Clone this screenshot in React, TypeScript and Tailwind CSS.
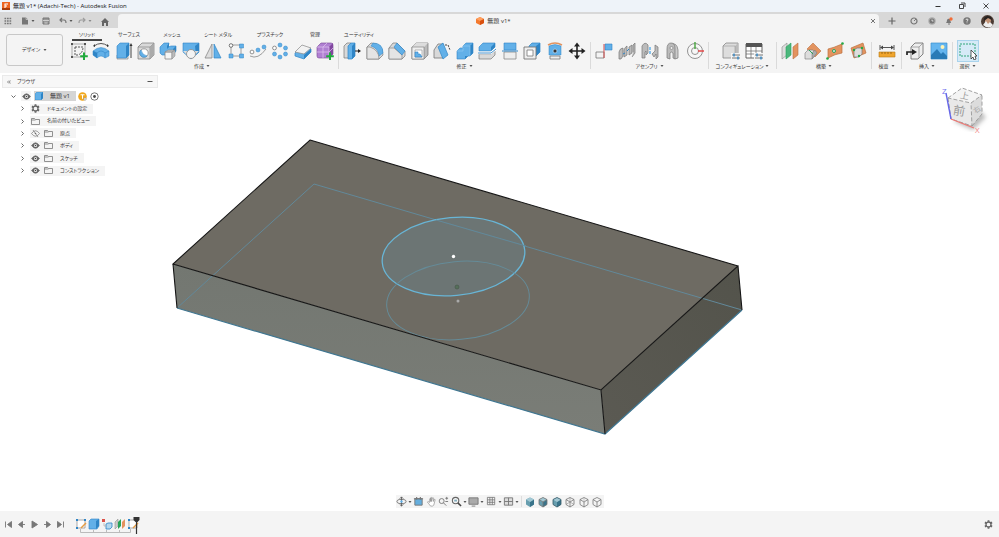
import type { ReactNode } from "react";
import clsx from "clsx";

const BLUE = "#62b0e8";
const DEEP = "#2f85c6";
const PALE = "#d9d9d9";
const LINE = "#777777";
const ORANGE = "#e3935f";
const GREEN = "#27a35a";

function Svg({ children, className = "size-[18px]", box = 18 }: { children: ReactNode; className?: string; box?: number }) {
  return (
    <svg viewBox={`0 0 ${box} ${box}`} className={clsx("shrink-0", className)} fill="none" aria-hidden="true">
      {children}
    </svg>
  );
}

function Caret() {
  return (
    <svg viewBox="0 0 4 4" className="size-1 shrink-0" aria-hidden="true">
      <path d="M.5 1h3L2 3z" fill="#555" />
    </svg>
  );
}

const plus = <path d="M14 10.500v7.500M10.200 14.200h7.600" stroke="#1faa3c" strokeWidth="2" />;

const createTools = [
  {
    name: "スケッチを作成",
    icon: (
      <>
        <path d="M2 2h13v13H2z" stroke="#999" strokeWidth=".8" />
        <path d="M5 5v8h3q5-2 5-8z" stroke="#555" strokeDasharray="2 1" />
        <path d="M1 1h2v2H1zM14 1h2v2h-2zM1 14h2v2H1z" fill="#555" />
        {plus}
      </>
    ),
  },
  {
    name: "フォームを作成",
    icon: (
      <>
        <path d="M2 4Q9-1 16 4" stroke="#555" />
        <path d="M1 4l2-2v3zM17 4l-2-2v3z" fill="#333" />
        <path d="M1 9q8-7 16 0v5l-4 2q-4-4-8 0l-4-3z" fill={BLUE} stroke={DEEP} strokeWidth=".5" />
        <path d="M1 9l4 2q4-4 8 0l4-2M5 11v5M13 11v5" stroke={DEEP} strokeWidth=".6" />
        <path d="M1 9l4 2v5l-4-3z" fill={DEEP} />
      </>
    ),
  },
  {
    name: "押し出し",
    icon: (
      <>
        <path d="M2 13h11v4H2z" fill="#ddd" stroke="#888" strokeWidth=".7" />
        <path d="M2 4l3-3h9v12l-3 3H2z" fill={BLUE} stroke={DEEP} strokeWidth=".6" />
        <path d="M11 4l3-3v12l-3 3z" fill={DEEP} />
        <path d="M16 16V3" stroke="#444" />
        <path d="M14.500 4L16 1l1.500 3z" fill="#333" />
      </>
    ),
  },
  {
    name: "穴",
    icon: (
      <>
        <path d="M1 5l4-4h12v12l-4 4H1z" fill={PALE} stroke={LINE} strokeWidth=".7" />
        <path d="M1 5h12v12M13 5l4-4" stroke={LINE} strokeWidth=".6" />
        <path d="M13 5l4-4v12l-4 4z" fill="#aaa" />
        <circle cx="7" cy="11" r="4.200" fill="white" stroke="#777" strokeWidth=".7" />
        <path d="M4 8a4 4 0 1 0 6 6q-5-1-6-6" fill={BLUE} stroke={DEEP} strokeWidth=".5" />
      </>
    ),
  },
  {
    name: "結合",
    icon: (
      <>
        <path d="M1 5l4-4h5l-1 4 3-1h5v5l-3 4H3l-2-2z" fill={BLUE} stroke={DEEP} strokeWidth=".6" />
        <path d="M8 4l2-3v4L8 7zM14 7l3-3v5l-3 4z" fill={DEEP} />
        <path d="M6 10h7v7H6z" fill="#f5f5f5" stroke="#888" strokeWidth=".8" />
        <path d="M6 10l3-2h7l-3 2zM13 10l3-2v6l-3 3z" fill="#bbb" stroke="#888" strokeWidth=".5" />
      </>
    ),
  },
  {
    name: "リブ",
    icon: (
      <>
        <path d="M1 1h16v9l-8 7-8-7z" fill={BLUE} stroke={DEEP} strokeWidth=".6" />
        <path d="M13 4l4-3v9l-3 3z" fill={DEEP} />
        <path d="M1 9h4v4zM17 9h-4v4z" fill="#ddd" />
        <circle cx="9" cy="12" r="4.500" fill="#f3f3f3" stroke="#888" strokeWidth=".8" />
      </>
    ),
  },
  {
    name: "ミラー",
    icon: (
      <>
        <path d="M8 2v14H1z" fill="#ddd" stroke="#888" strokeWidth=".8" />
        <path d="M10 2v14h7z" fill={BLUE} stroke={DEEP} strokeWidth=".7" />
      </>
    ),
  },
  {
    name: "パターン",
    icon: (
      <>
        <path d="M5 3h9M4 5v9M14 6v7M5 14h8" stroke="#888" strokeWidth=".8" />
        <circle cx="4" cy="3.500" r="1.800" fill="white" stroke="#555" strokeWidth=".8" />
        <path d="M12.500 2h4v4h-4zM12.500 12h4v4h-4zM2 12h4v4H2z" fill={BLUE} stroke={DEEP} strokeWidth=".5" />
      </>
    ),
  },
  {
    name: "パス上のパターン",
    icon: (
      <>
        <path d="M1 14q8 4 16-7" stroke="#888" strokeWidth=".8" />
        <circle cx="3" cy="10" r="1.900" fill="white" stroke="#777" strokeWidth=".8" />
        <circle cx="9" cy="8" r="2" fill={BLUE} stroke={DEEP} strokeWidth=".5" />
        <circle cx="15" cy="5" r="2" fill={BLUE} stroke={DEEP} strokeWidth=".5" />
      </>
    ),
  },
  {
    name: "円形状パターン",
    icon: (
      <>
        <circle cx="3.500" cy="6" r="1.900" fill="white" stroke="#777" strokeWidth=".8" />
        <g fill={BLUE} stroke={DEEP} strokeWidth=".5">
          <circle cx="9" cy="3" r="2" />
          <circle cx="14.500" cy="6" r="2" />
          <circle cx="14.500" cy="12" r="2" />
          <circle cx="9" cy="15" r="2" />
          <circle cx="3.500" cy="12" r="2" />
        </g>
      </>
    ),
  },
  {
    name: "厚み",
    icon: (
      <>
        <path d="M1 11l7-7 9 3v3l-7 7-9-3z" fill={BLUE} stroke={DEEP} strokeWidth=".7" />
        <path d="M10 13l7-6v3l-7 7z" fill={DEEP} />
        <path d="M1 10l7-7 9 3-7 6z" fill="#f2f2f2" stroke="#888" strokeWidth=".7" />
      </>
    ),
  },
  {
    name: "フォーム",
    icon: (
      <>
        <path d="M1 5l4-4h10q2 0 2 2v9l-4 4H3q-2 0-2-2z" fill="#b080d2" stroke="#764496" strokeWidth=".6" />
        <path d="M13 5l4-4v11l-4 4z" fill="#81479f" />
        <path d="M1 5h12v11M7 5v11M1 10h12l4-4M7 5l4-4" stroke="#e2c6f2" strokeWidth=".7" />
        {plus}
      </>
    ),
  },
];

const modifyTools = [
  {
    name: "プレス/プル",
    icon: (
      <>
        <path d="M1 4l3-3h4v15H1z" fill={PALE} stroke={LINE} strokeWidth=".7" />
        <path d="M5 4l3-3h4v13l-3 3H5z" fill={BLUE} stroke={DEEP} strokeWidth=".7" />
        <path d="M9 4l3-3v13l-3 3z" fill={DEEP} />
        <path d="M12 9h4" stroke="#222" />
        <path d="M15 7l3 2-3 2z" fill="#222" />
      </>
    ),
  },
  {
    name: "フィレット",
    icon: (
      <>
        <path d="M1 5l4-4q12 0 12 12l-4 4H1z" fill={PALE} stroke={LINE} strokeWidth=".7" />
        <path d="M7 1q10 0 10 10l-4 3q-1-8-8-10z" fill={BLUE} stroke={DEEP} strokeWidth=".5" />
        <path d="M1 5h3q9 3 9 12H1z" fill="#e4e4e4" stroke={LINE} strokeWidth=".6" />
      </>
    ),
  },
  {
    name: "面取り",
    icon: (
      <>
        <path d="M1 6l4-5h4l8 8v5l-3 3H1z" fill={PALE} stroke={LINE} strokeWidth=".7" />
        <path d="M1 6h5l8 7v4H1z" fill="#e4e4e4" stroke={LINE} strokeWidth=".6" />
        <path d="M6 5l3-4 8 8-3 4z" fill={BLUE} stroke={DEEP} strokeWidth=".6" />
      </>
    ),
  },
  {
    name: "シェル",
    icon: (
      <>
        <path d="M1 5l4-4h12v12l-4 4H1z" fill="#bbb" stroke={LINE} strokeWidth=".7" />
        <path d="M1 5l4-4h12l-4 4z" fill="#ddd" />
        <path d="M1 5h12v12H1z" fill="#eee" stroke={LINE} strokeWidth=".6" />
        <path d="M4 8h7v7H4z" fill="white" stroke={LINE} strokeWidth=".5" />
        <path d="M4 10v5h7l-2-3H7v-2z" fill={BLUE} stroke={DEEP} strokeWidth=".6" />
      </>
    ),
  },
  {
    name: "勾配",
    icon: (
      <>
        <path d="M1 8l4-6h5v14H1z" fill={PALE} stroke={LINE} strokeWidth=".8" />
        <path d="M5 5l5-4 5 12-5 4z" fill={BLUE} stroke={DEEP} strokeWidth=".7" />
        <path d="M12 3h3l2 5" stroke="#444" strokeDasharray="2 1" />
      </>
    ),
  },
  {
    name: "結合",
    icon: (
      <>
        <path d="M1 9l3-3h3V4l3-3h7v10l-3 3h-2l-3 3H1z" fill={BLUE} stroke={DEEP} strokeWidth=".6" />
        <path d="M14 4l3-3v10l-3 3zM9 14h3l-3 3z" fill={DEEP} />
        <path d="M1 9h6V4h7v10" stroke="#94cef3" strokeWidth=".6" />
      </>
    ),
  },
  {
    name: "面をオフセット",
    icon: (
      <>
        <path d="M1 12h12l4-3v4l-4 4H1z" fill={PALE} stroke={LINE} strokeWidth=".7" />
        <path d="M1 5l4-4h12v4l-4 4H1z" fill={BLUE} stroke={DEEP} strokeWidth=".6" />
        <path d="M13 5l4-4v4l-4 4z" fill={DEEP} />
        <path d="M0 11h13l5-4" stroke="white" strokeWidth="2.500" />
        <path d="M0 11h13l5-4" stroke={DEEP} strokeWidth=".9" />
      </>
    ),
  },
  {
    name: "面を分割",
    icon: (
      <>
        <path d="M3 10h12v7H3z" fill="#eee" stroke="#888" strokeWidth=".8" />
        <path d="M3 1h12v7H3z" fill={BLUE} stroke={DEEP} strokeWidth=".6" />
        <path d="M1 9h16" stroke={DEEP} />
      </>
    ),
  },
  {
    name: "ボディを分割",
    icon: (
      <>
        <path d="M6 4l3-3h8v9l-4 4H6z" fill={BLUE} stroke={DEEP} strokeWidth=".7" />
        <path d="M13 4l4-3v9l-4 4z" fill={DEEP} />
        <path d="M1 5h12v12H1z" fill="#eee" stroke={LINE} strokeWidth=".9" />
        <path d="M4 8h6v6H4z" fill="white" stroke={LINE} strokeWidth=".8" />
      </>
    ),
  },
  {
    name: "シルエット分割",
    icon: (
      <>
        <path d="M2 3q7-4 14 0" stroke={ORANGE} strokeWidth="1.500" />
        <path d="M3 4q6-3 12 0v9H3z" fill={BLUE} stroke={DEEP} strokeWidth=".5" />
        <path d="M4 14h10v3H4z" fill="#eee" stroke="#777" strokeWidth=".8" />
        <circle cx="9" cy="9" r="2" fill="#333" stroke="#bde0f6" strokeWidth=".7" />
      </>
    ),
  },
  {
    name: "移動",
    icon: (
      <>
        <path d="M9 3v12M3 9h12" stroke="#222" strokeWidth="1.600" />
        <path d="M6 4.500l3-4 3 4zM6 13.500l3 4 3-4zM4.500 6l-4 3 4 3zM13.500 6l4 3-4 3z" fill="#222" />
      </>
    ),
  },
];

const assemblyTools = [
  {
    name: "新規コンポーネント",
    icon: (
      <>
        <path d="M1 10h8v6H1z" fill="#f3f3f3" stroke="#777" strokeWidth=".8" />
        <path d="M10 2h7v6h-7z" fill={BLUE} stroke={DEEP} strokeWidth=".6" />
        <path d="M9 2v14" stroke="#d34b4b" />
      </>
    ),
  },
  {
    name: "ジョイント",
    icon: (
      <>
        <path d="M1 17v-7q1-4 4-4v8l-2 3zM6 15V8q1-3 3-4v9zM11 13V5l3-2v8zM15 10V3l2-2v10l-3 4" fill="#bbb" stroke="#777" strokeWidth=".7" />
        <path d="M9 9l2-2M5 12l2-1" stroke={DEEP} />
      </>
    ),
  },
  {
    name: "位置固定ジョイント",
    icon: (
      <>
        <path d="M1 16V4q3-5 6-1v8l-2 2v-4l-1 1v6zM11 12l3-3V3l3 2v10l-2 2v-5l-2 3z" fill="#bbb" stroke="#777" strokeWidth=".7" />
        <path d="M9 5v3M9 9v3" stroke={BLUE} strokeWidth="1.500" />
      </>
    ),
  },
  {
    name: "剛性グループ",
    icon: (
      <>
        <path d="M7 2q7-2 8 6v8l-3 1" stroke="#777" fill="#ccc" strokeWidth=".7" />
        <path d="M4 16V7q0-6 4-6 4 0 4 5v11l-2-1v-5q-2-2-3 0v6z" fill="#bbb" stroke="#777" strokeWidth=".7" />
        <circle cx="8.500" cy="6" r="1.500" fill="#eee" stroke="#777" strokeWidth=".6" />
      </>
    ),
  },
  {
    name: "モーションリンク",
    icon: (
      <>
        <circle cx="9" cy="9" r="7.500" fill="#f7f7f7" stroke="#888" strokeWidth=".9" />
        <circle cx="9" cy="9" r="3.500" stroke="#888" strokeWidth=".9" />
        <path d="M9 0v7" stroke="#58ad50" strokeWidth="1.600" />
        <path d="M12 9h6" stroke="#e45151" strokeWidth="1.600" />
      </>
    ),
  },
];

const sliders = (
  <>
    <path d="M10 13h8M10 16h8" stroke="#555" strokeWidth=".8" />
    <path d="M12 11.500v3M16 14.500v3" stroke={DEEP} strokeWidth="1.400" />
  </>
);

const configTools = [
  {
    name: "コンフィギュレーション",
    icon: (
      <>
        <path d="M1 4l3-3h12v11l-3 4H1z" fill="#ddd" stroke="#888" strokeWidth=".8" />
        <path d="M13 4l3-3v11l-3 3z" fill="#bbb" />
        <path d="M1 4h12v11" stroke="#999" strokeWidth=".6" />
        <path d="M9 11h9v7H9z" fill="#f4f4f4" />
        {sliders}
      </>
    ),
  },
  {
    name: "テーブル",
    icon: (
      <>
        <path d="M1 2h16v14H1z" fill="white" stroke="#555" strokeWidth=".9" />
        <path d="M1 1h16v4H1z" fill="#555" />
        <path d="M1 9h16M1 12h9M6 5v11M11 5v6" stroke="#666" strokeWidth=".7" />
        <path d="M9 11h9v7H9z" fill="#f4f4f4" />
        {sliders}
      </>
    ),
  },
];

const constructTools = [
  {
    name: "オフセット平面",
    icon: (
      <>
        <path d="M1 5l5-4v12l-5 4z" fill="#ddd" stroke="#888" strokeWidth=".6" />
        <path d="M5 5l5-4v12l-5 4z" fill="#4bb77c" stroke={GREEN} strokeWidth=".6" />
        <path d="M12 5l5-4v12l-5 4z" fill={ORANGE} stroke="#ba7141" strokeWidth=".6" />
      </>
    ),
  },
  {
    name: "傾斜平面",
    icon: (
      <>
        <path d="M3 7l6-6 8 8-6 6z" fill={ORANGE} stroke="#ba7141" strokeWidth=".6" />
        <path d="M1 11l3-3h5l3 4-4 5H1z" fill="#ddd" stroke="#777" strokeWidth=".6" />
        <path d="M8 11l3-3 2 3-5 6z" fill="#aaa" stroke="#777" strokeWidth=".5" />
        <path d="M5 8l4 4" stroke={GREEN} />
      </>
    ),
  },
  {
    name: "接平面",
    icon: (
      <>
        <path d="M2 7q5-1 14-5v9q-7 1-14 5z" fill={ORANGE} stroke="#ba7141" strokeWidth=".7" />
        <circle cx="8" cy="9" r="1.500" fill="#eee" stroke={GREEN} />
        <circle cx="16.500" cy="1.500" r="1.300" fill="#22a844" />
        <circle cx="1.500" cy="16.500" r="1.300" fill="#22a844" />
      </>
    ),
  },
  {
    name: "3点を通過する平面",
    icon: (
      <>
        <path d="M2 6l12-5 3 10-12 5z" fill={ORANGE} stroke="#ba7141" strokeWidth=".7" />
        <path d="M5 8l3-2h5v6l-3 3H5z" fill="#ddd" stroke="#777" strokeWidth=".7" />
        <circle cx="5" cy="8" r="1.200" fill="#22a844" />
        <circle cx="13" cy="6" r="1.200" fill="#22a844" />
        <circle cx="10" cy="14" r="1.200" fill="#22a844" />
      </>
    ),
  },
];

const measureTools = [
  {
    name: "計測",
    icon: (
      <>
        <path d="M2 3v5M16 3v5M3 5.500h12" stroke="#444" strokeWidth=".9" />
        <path d="M2 5.500l3-2v4zM16 5.500l-3-2v4z" fill="#444" />
        <path d="M1 10h16v5H1z" fill="#f0a52e" stroke="#b57919" strokeWidth=".6" />
        <path d="M4 10v2M7 10v2M10 10v2M13 10v2" stroke="#81500c" strokeWidth=".7" />
      </>
    ),
  },
];

const insertTools = [
  {
    name: "派生を挿入",
    icon: (
      <>
        <path d="M5 5l4-4h8v11l-5 5H5z" fill="#eee" stroke="#666" strokeWidth=".8" />
        <path d="M5 5h8v11M13 5l4-4" stroke="#888" strokeWidth=".7" />
        <path d="M1 13v-3h6" stroke="#222" strokeWidth="1.700" />
        <path d="M6 7l5 3-5 3z" fill="#222" />
      </>
    ),
  },
  {
    name: "キャンバス",
    icon: (
      <>
        <path d="M1 1h16v16H1z" fill="#64b5ef" stroke="#398fcf" strokeWidth=".7" />
        <circle cx="12.500" cy="5" r="2" fill="#fff3b5" />
        <path d="M1 13l6-6 4 5 2-2 4 4v3H1z" fill="#287ab6" />
      </>
    ),
  },
];

const selectTools = [
  {
    name: "選択",
    icon: (
      <>
        <path d="M1 2h15v12H1z" stroke="#31a67b" strokeDasharray="2 1" />
        <path d="M12 8v9l2-2 1 3 2-1-1-3h2z" fill="white" stroke="#333" strokeWidth=".8" />
      </>
    ),
  },
];

const groups = [
  { label: "作成", tools: createTools, width: "w-[264px]" },
  { label: "修正", tools: modifyTools, width: "w-[243px]" },
  { label: "アセンブリ", tools: assemblyTools, width: "w-[109px]" },
  { label: "コンフィギュレーション", tools: configTools, width: "w-[59px]", pad: "px-[9px]" },
  { label: "構築", tools: constructTools, width: "w-[86px]" },
  { label: "検査", tools: measureTools, width: "w-[21px]" },
  { label: "挿入", tools: insertTools, width: "w-[42px]" },
  { label: "選択", tools: selectTools, width: "w-[21px]", active: true },
];

const tabs = [
  { label: "ソリッド", width: "w-[30px]", active: true },
  { label: "サーフェス", width: "w-[54px]" },
  { label: "メッシュ", width: "w-[32px]" },
  { label: "シート メタル", width: "w-[60px]" },
  { label: "プラスチック", width: "w-[44px]" },
  { label: "管理", width: "w-[46px]" },
  { label: "ユーティリティ", width: "w-[42px]" },
];

function TitleBar() {
  return (
    <header className="flex h-3 items-center bg-[#eef3f9] pl-[2px] pr-[9px]">
      <Svg className="size-2" box={8}>
        <path d="M0 0h8v8H0z" fill="#ed6420" />
        <path d="M0 6h8v2H0z" fill="#a63b0b" />
        <path d="M3 6V2h3M3 4h2" stroke="white" strokeWidth="1.100" />
      </Svg>
      <h1 className="ml-[3px] text-[6px] leading-3 text-[#111]">無題 v1* (Adachi-Tech) - Autodesk Fusion</h1>
      <div className="ml-auto flex gap-4">
        <button aria-label="最小化">
          <Svg className="size-2" box={8}><path d="M1.500 4.500h5" stroke="#333" /></Svg>
        </button>
        <button aria-label="元に戻す">
          <Svg className="size-2" box={8}>
            <path d="M1.500 2.500h4v4h-4zM3 1h4v4" stroke="#333" strokeWidth=".9" />
          </Svg>
        </button>
        <button aria-label="閉じる">
          <Svg className="size-2" box={8}><path d="M1.500 1.500l5 5m0-5l-5 5" stroke="#333" strokeWidth=".9" /></Svg>
        </button>
      </div>
    </header>
  );
}

function DocumentBar() {
  return (
    <div className="flex h-4 border-t-2 border-[#d8d8d8] bg-[#d8d8d8]">
      <div className="flex w-[118px] items-center pl-1">
        <button aria-label="データ パネル" className="mr-[9px]">
          <Svg className="size-2" box={8}>
            <path d="M.5 1.500h7M.5 4h7M.5 6.500h7" stroke="#777" strokeWidth="1.600" strokeDasharray="1.700 .8" />
          </Svg>
        </button>
        <button aria-label="ファイル" className="mr-[7px] flex items-center gap-[2px]">
          <Svg className="size-2" box={8}>
            <path d="M1 .5h4l2 2v5H1z" fill="#777" />
            <path d="M5 .5v2h2" stroke="#ddd" strokeWidth=".6" />
          </Svg>
          <Caret />
        </button>
        <button aria-label="保存" className="mr-[9px]">
          <Svg className="size-2" box={8}>
            <path d="M1 1h6v6H1z" fill="#999" stroke="#777" />
            <path d="M1 3.500h6M2.500 6h3" stroke="#ddd" strokeWidth=".8" />
          </Svg>
        </button>
        <button aria-label="元に戻す" className="mr-[5px] flex items-center gap-[2px]">
          <Svg className="size-2" box={8}><path d="M3 1L1 3l2 2M1 3h4q2 0 2 3" stroke="#777" strokeWidth="1.200" /></Svg>
          <Caret />
        </button>
        <button aria-label="やり直し" className="mr-[9px] flex items-center gap-[2px] opacity-60">
          <Svg className="size-2" box={8}><path d="M5 1l2 2-2 2M7 3H3Q1 3 1 6" stroke="#777" strokeWidth="1.200" /></Svg>
          <Caret />
        </button>
        <button aria-label="ホーム" className="pt-[2px]">
          <Svg className="size-2" box={8}><path d="M0 4l4-4 4 4H7v4H5V5H3v3H1V4z" fill="#666" /></Svg>
        </button>
      </div>
      <div className="flex flex-1 items-center rounded-t-sm bg-[#f4f4f4] pr-[2px]">
        <div className="flex flex-1 items-center justify-center gap-[3px] text-[6px]">
          <Svg className="size-2" box={8}>
            <path d="M4 0l4 2v4L4 8 0 6V2z" fill="#f4792d" />
            <path d="M4 0l4 2-4 2-4-2z" fill="#ffa060" />
            <path d="M4 4l4-2v4L4 8z" fill="#d9500f" />
          </Svg>
          無題 v1*
        </div>
        <button aria-label="タブを閉じる">
          <Svg className="size-2" box={8}><path d="M2 2l4 4m0-4L2 6" stroke="#555" strokeWidth=".8" /></Svg>
        </button>
      </div>
      <div className="flex w-[120px] items-center justify-between pl-[9px] pr-[5px]">
        <button aria-label="新規" className="mr-1">
          <Svg className="size-2" box={8}><path d="M4 .5v7M.5 4h7" stroke="#666" strokeWidth="1.200" /></Svg>
        </button>
        <button aria-label="拡張機能">
          <Svg className="size-2" box={8}>
            <circle cx="4" cy="4" r="3" stroke="#777" strokeWidth="1.200" />
            <path d="M4 4l2-2" stroke="#777" />
          </Svg>
        </button>
        <button aria-label="ジョブ ステータス">
          <Svg className="size-2" box={8}>
            <circle cx="4" cy="4" r="3.700" fill="#aaa" />
            <circle cx="4" cy="4" r="2.500" fill="#777" />
            <path d="M4 2.500V4h1.500" stroke="white" strokeWidth=".7" />
          </Svg>
        </button>
        <button aria-label="通知">
          <Svg className="size-2" box={8}>
            <path d="M1 6q1-1 1-3 1-2 3-1l1 4zM3 6.500h2v1H3z" fill="#777" />
            <circle cx="6" cy="2" r="1.700" fill="#f36c36" />
          </Svg>
        </button>
        <button aria-label="ヘルプ">
          <Svg className="size-2" box={8}>
            <circle cx="4" cy="4" r="3.700" fill="#777" />
            <path d="M3 3q0-1 1-1t1 1q0 .5-1 1v.6M4 5.500v.7" stroke="white" strokeWidth=".8" />
          </Svg>
        </button>
        <button aria-label="アカウント">
          <Svg className="size-[13px]" box={13}>
            <circle cx="6.500" cy="6.500" r="6.500" fill="#4c3c34" />
            <path d="M6 2q4 0 4 4l-2 4-4-2V4z" fill="#c39478" />
            <path d="M2 10l3-4 2 3 2-2 3 3q-4 5-10 0z" fill="#eee" />
            <path d="M3 6q-1-4 3-5 5 0 5 4L7 3z" fill="#272321" />
          </Svg>
        </button>
      </div>
    </div>
  );
}

function Ribbon() {
  return (
    <div className="flex h-[45px] bg-[#f4f4f4] pl-[6px]">
      <button className="mr-[7px] mt-[6px] flex h-8 w-[57px] shrink-0 items-center justify-center gap-[3px] rounded-[3px] border border-[#c8c8c8] text-[5px]">
        デザイン <Caret />
      </button>
      <div className="min-w-0 flex-1">
        <nav className="flex h-3 pl-[2px]">
          {tabs.map((tab) => (
            <button
              key={tab.label}
              className={clsx(
                "h-[13px] shrink-0 whitespace-nowrap border-b-2 pt-[2px] text-center text-[5px] leading-[9px]",
                tab.width,
                tab.active ? "border-[#444]" : "border-transparent",
              )}
            >
              {tab.label}
            </button>
          ))}
        </nav>
        <div className="flex">
          {groups.map((group, i) => (
            <div key={group.label} className="flex shrink-0">
              {i > 0 && <div className="mx-1 mt-[2px] h-[27px] w-px bg-[#dadada]" />}
              <section className={clsx("flex flex-col items-center", group.width)}>
                <div className={clsx("flex h-[22px] w-full items-center", group.tools.length > 1 ? "justify-between" : "justify-center", group.pad)}>
                  {group.tools.map((tool) => (
                    <button
                      key={tool.name}
                      aria-label={tool.name}
                      className={clsx(group.active && "-mx-px bg-[#d5eaf7] p-px outline outline-[#a9d3ec]")}
                    >
                      <Svg>{tool.icon}</Svg>
                    </button>
                  ))}
                </div>
                <button className="flex h-2 items-center gap-[2px] whitespace-nowrap text-[5px] leading-2">
                  {group.label} <Caret />
                </button>
              </section>
            </div>
          ))}
        </div>
      </div>
    </div>
  );
}

function Eye({ off = false }: { off?: boolean }) {
  return (
    <Svg className="size-[9px]" box={9}>
      <path d="M.5 4.500q4-5.500 8 0-4 5.500-8 0z" fill={off ? "none" : "#666"} stroke="#666" strokeWidth=".6" />
      <circle cx="4.500" cy="4.500" r="1.500" fill="white" />
      <circle cx="4.500" cy="4.500" r=".8" fill="#444" />
      {off && <path d="M2 1l5 7" stroke="#777" strokeWidth=".7" />}
    </Svg>
  );
}

function Folder() {
  return (
    <Svg className="size-[9px]" box={9}>
      <path d="M.5 1.500h3l1 1h4v5h-8zM.5 3h4" stroke="#777" strokeWidth=".8" />
    </Svg>
  );
}

function Gear() {
  return (
    <Svg className="size-[9px]" box={9}>
      <circle cx="4.500" cy="4.500" r="2.500" stroke="#666" strokeWidth="1.300" />
      <path
        d="M4.500 .3v1.500M4.500 7.200v1.500M.9 2.400l1.300.7M6.800 5.900l1.300.7M.9 6.600l1.300-.7M6.800 3.100l1.300-.7"
        stroke="#666"
        strokeWidth="1.800"
      />
    </Svg>
  );
}

const tree = [
  { label: "ドキュメントの設定", kind: "gear" },
  { label: "名前の付いたビュー", kind: "folder" },
  { label: "原点", kind: "hidden" },
  { label: "ボディ", kind: "shown" },
  { label: "スケッチ", kind: "shown" },
  { label: "コンストラクション", kind: "shown" },
];

function BrowserPanel() {
  return (
    <aside className="relative ml-[2px] w-[156px] pt-[2px] text-[5px]">
      <div className="flex h-[13px] items-center border border-[#eaeaea] bg-[#f7f7f7] px-1">
        <button aria-label="折りたたむ">
          <Svg className="size-1" box={4}><path d="M2 .5L.5 2 2 3.500M3.700 .5L2.200 2l1.500 1.500" stroke="#444" strokeWidth=".6" /></Svg>
        </button>
        <h2 className="ml-[6px]">ブラウザ</h2>
        <button aria-label="パネルを最小化" className="ml-auto">
          <Svg className="size-[6px]" box={6}><path d="M.5 2.500h5" stroke="#555" /></Svg>
        </button>
      </div>
      <ul className="mt-[2px] grid h-[87px] grid-rows-7">
        <li className="flex items-center pl-[9px]">
          <button aria-label="閉じる">
            <Svg className="size-[5px]" box={5}><path d="M.5 1.500l2 2 2-2" stroke="#444" strokeWidth=".8" /></Svg>
          </button>
          <div className="ml-[5px] flex h-[10px] items-center bg-[#f4f4f4] pl-px"><Eye /></div>
          <div className="ml-[3px] flex h-[10px] w-[42px] items-center gap-[7px] bg-[#d5d5d5] pl-px text-[6px]">
            <Svg className="size-2" box={8}>
              <path d="M0 2l2-2h6v6L6 8H0z" fill={BLUE} stroke={DEEP} strokeWidth=".5" />
              <path d="M6 2l2-2v6L6 8z" fill={DEEP} />
            </Svg>
            無題 v1
          </div>
          <Svg className="ml-[2px] size-[9px]" box={9}>
            <circle cx="4.500" cy="4.500" r="4.300" fill="#f0a71c" />
            <path d="M2.500 2.800h4M4.500 2.800v4" stroke="white" />
            <circle cx="7" cy="7" r="1.300" fill="#eee" stroke="#888" strokeWidth=".5" />
          </Svg>
          <button aria-label="アクティブ" className="ml-[3px]">
            <Svg className="size-[9px]" box={9}>
              <circle cx="4.500" cy="4.500" r="3.700" fill="white" stroke="#444" strokeWidth=".7" />
              <circle cx="4.500" cy="4.500" r="1.400" fill="#444" />
            </Svg>
          </button>
        </li>
        {tree.map((item) => (
          <li key={item.label} className="flex items-center pl-[18px]">
            <button aria-label={`${item.label}を開く`}>
              <Svg className="size-[5px]" box={5}><path d="M1.500 .5l2 2-2 2" stroke="#444" strokeWidth=".8" /></Svg>
            </button>
            <div className="ml-[5px] flex h-[10px] items-center bg-[#f4f4f4] pl-px pr-[6px]">
              {item.kind === "gear" && <Gear />}
              {item.kind === "folder" && <Folder />}
              {(item.kind === "hidden" || item.kind === "shown") && (
                <span className="flex gap-1">
                  <Eye off={item.kind === "hidden"} />
                  <Folder />
                </span>
              )}
              <span className="ml-[7px] whitespace-nowrap">{item.label}</span>
            </div>
          </li>
        ))}
      </ul>
    </aside>
  );
}

function Model() {
  return (
    <svg viewBox="0 73 999 438" className="absolute inset-0 size-full" aria-label="モデル">
      <defs>
        <linearGradient id="front" x1="0" y1="0" x2="0" y2="1">
          <stop offset="0" stopColor="#737771" />
          <stop offset="1" stopColor="#7a7d77" />
        </linearGradient>
        <linearGradient id="side" x1="0" y1="1" x2="1" y2="0">
          <stop offset="0" stopColor="#5b5a53" />
          <stop offset="1" stopColor="#53534b" />
        </linearGradient>
      </defs>
      <path d="M310 140L738 266 601 390 173 264z" fill="#6e6b63" />
      <path d="M173 264L601 390 605 434 177 308z" fill="url(#front)" />
      <path d="M601 390L738 266 742 310 605 434z" fill="url(#side)" />
      <path d="M177 308L314 184 742 310" fill="none" stroke="#62899a" strokeWidth="1" />
      <path d="M177 308L605 434 742 310" fill="none" stroke="#3f7691" strokeWidth="1.200" />
      <ellipse cx="453.500" cy="256.500" rx="71.500" ry="39" transform="rotate(-5 453.500 256.500)" fill="#6c7777" fillOpacity=".85" stroke="#68b5d6" strokeWidth="1.300" />
      <path d="M436 220L526 246" stroke="#62899a" strokeWidth="1" />
      <ellipse cx="458" cy="300.500" rx="71.500" ry="39" transform="rotate(-5 458 300.500)" fill="none" stroke="#658b98" strokeWidth="1" />
      <path d="M310 140L738 266 601 390 173 264zM173 264l4 44M601 390l4 44M738 266l4 44" fill="none" stroke="#161616" strokeWidth="1.100" />
      <circle cx="453.500" cy="256.500" r="1.700" fill="white" />
      <circle cx="457" cy="287" r="2" fill="#55705a" stroke="#465648" strokeWidth=".6" />
      <circle cx="458" cy="301" r="1.500" fill="#aaa" />
    </svg>
  );
}

function ViewCube() {
  return (
    <svg viewBox="0 0 60 60" className="absolute right-1 top-[6px] size-[60px]" aria-label="ビュー キューブ">
      <defs>
        <filter id="soft"><feGaussianBlur stdDeviation="2" /></filter>
      </defs>
      <path d="M18 42l20 9 13-13-6-6z" fill="#bbb" filter="url(#soft)" />
      <path d="M13 19L27 9l20 7-11 8z" fill="#f4f4f4" />
      <path d="M13 19l23 5 1 23-21-7z" fill="#e9e9e9" />
      <path d="M36 24l11-8v19L37 47z" fill="#dcdcdc" />
      <path d="M13 19L27 9l20 7-11 8zM13 19l3 21 21 7-1-23M37 47l10-12V16" fill="none" stroke="#999" strokeWidth=".9" strokeDasharray="4 2" />
      <text x="18" y="36" fontSize="12" fill="#999" transform="rotate(10 24 32)">前</text>
      <text x="25" y="20" fontSize="9" fill="#999" transform="rotate(12 29 17)">上</text>
      <text x="38" y="33" fontSize="7" fill="#aaa" transform="rotate(-35 42 30)">右</text>
      <path d="M11 14l5 26" stroke="#6566e8" strokeWidth="1.400" />
      <path d="M16 40l23 9" stroke="#ef7773" strokeWidth="1.200" />
      <text x="7" y="15" fontSize="8" fill="#7373ee">Z</text>
      <text x="40" y="54" fontSize="8" fill="#f18484">X</text>
    </svg>
  );
}

const shadedCube = (
  <>
    <path d="M6 1.500l4 2v5l-4 2.500-4-2.500v-5z" fill="#679eaf" />
    <path d="M6 6l4-2.500v5L6 11z" fill="#39738a" />
    <path d="M6 1.500l4 2L6 6 2 3.500z" fill="#a2c8d4" />
  </>
);
const wireCube = <path d="M6 1.500l4 2v5L6 11 2 8.500v-5zM2 3.500L6 6l4-2.500M6 6v5" stroke="#777" strokeWidth=".8" />;

const navTools = [
  {
    name: "オービット",
    menu: true,
    icon: (
      <>
        <ellipse cx="6" cy="6" rx="5" ry="2.300" stroke="#555" strokeWidth=".8" />
        <path d="M6 1v10M4 3l2-2 2 2M4 9l2 2 2-2" stroke="#555" strokeWidth=".9" />
        <circle cx="6" cy="6" r="1.300" fill={BLUE} />
      </>
    ),
  },
  {
    name: "ルックアット",
    icon: (
      <>
        <path d="M2 3h8v7H2z" fill="#64aede" stroke="#777" />
        <path d="M1 3h10M4 1v3M8 1v3" stroke="#777" strokeWidth="1.200" />
      </>
    ),
  },
  {
    name: "画面移動",
    icon: <path d="M4 7V3l1-.5V6 2l1-.5V6l1-4h1v4l1-2.500 1 .5-1.500 6L7 11H5L1.500 6.500l1-.5z" fill="white" stroke="#888" strokeWidth=".7" />,
  },
  {
    name: "ズーム",
    icon: (
      <>
        <circle cx="4" cy="5.500" r="2.700" stroke="#777" />
        <path d="M6 7.500l3 3M8 2.500h3M9.500 1v3M8 6h3" stroke="#777" />
      </>
    ),
  },
  {
    name: "フィット",
    menu: true,
    icon: (
      <>
        <circle cx="5" cy="5" r="3.500" stroke="#666" strokeWidth="1.200" />
        <path d="M7.500 7.500L11 11" stroke="#444" strokeWidth="1.600" />
        <path d="M3.500 4h3v2h-3z" fill="#85afc0" />
      </>
    ),
  },
  { name: "表示設定", menu: true, icon: <><path d="M1 2h10v7H1z" fill="#aaa" stroke="#777" /><path d="M4 11h4" stroke="#777" /></> },
  { name: "グリッド", menu: true, icon: <path d="M1.500 1.500h8v8h-8zM4.200 1.500v8M6.900 1.500v8M1.500 4.200h8M1.500 6.900h8" stroke="#777" strokeWidth=".9" /> },
  { name: "ビューポート", menu: true, icon: <path d="M1.500 2h9v8h-9zM6 2v8M1.500 6h9" fill="#ddd" stroke="#777" /> },
];

const styleTools = [
  { name: "シェーディング", icon: shadedCube },
  { name: "隠れたエッジ付き", icon: <>{shadedCube}{wireCube}</> },
  { name: "エッジ付き", icon: <>{shadedCube}<path d="M6 1.500l4 2v5L6 11 2 8.500v-5z" stroke="#345866" strokeWidth=".8" /></> },
  { name: "ワイヤフレーム", icon: <>{wireCube}<path d="M2 8.500L6 6l4 2.500M6 1.500V6" stroke="#888" strokeWidth=".6" /></> },
  { name: "隠れたエッジ", icon: <>{wireCube}<path d="M6 1.500V6" stroke="#aaa" strokeWidth=".6" /></> },
  { name: "表示エッジのみ", icon: wireCube },
];

function NavigationBar() {
  return (
    <div className="absolute bottom-[3px] left-1/2 flex h-[13px] w-[208px] -translate-x-1/2 items-center justify-between bg-[#f4f4f4]">
      {navTools.map((tool) => (
        <button key={tool.name} aria-label={tool.name} className="flex items-center gap-px">
          <Svg className="size-[11px]" box={12}>{tool.icon}</Svg>
          {tool.menu && <Caret />}
        </button>
      ))}
      <div className="h-[11px] w-px bg-[#ddd]" />
      {styleTools.map((tool) => (
        <button key={tool.name} aria-label={tool.name}>
          <Svg className="size-[12px]" box={12}>{tool.icon}</Svg>
        </button>
      ))}
    </div>
  );
}

const playback = [
  { name: "先頭へ", path: "M1.500 1.500v6M7.500 1.500l-4 3 4 3z" },
  { name: "前へ", path: "M5.500 1.500l-4 3 4 3zM5 4.500h3" },
  { name: "再生", path: "M2 1l5.500 3.500L2 8z" },
  { name: "次へ", path: "M3.500 1.500l4 3-4 3zM1 4.500h3" },
  { name: "最後へ", path: "M1.500 1.500l4 3-4 3zM7.500 1.500v6" },
];

const sketchIcon = (
  <>
    <path d="M2 2h8v8H2z" fill="white" stroke="#888" strokeWidth=".7" />
    <path d="M1 1h2v2H1zM9 1h2v2H9zM1 9h2v2H1z" fill={DEEP} />
    <path d="M6 10l5-5" stroke="#e59b42" strokeWidth="1.500" />
  </>
);

const features = [
  { name: "スケッチ1", icon: sketchIcon },
  {
    name: "押し出し1",
    icon: (
      <>
        <path d="M1 3l2-2h8v7l-2 3H1z" fill={BLUE} stroke={DEEP} strokeWidth=".6" />
        <path d="M8 3l3-2v7l-3 3z" fill={DEEP} />
      </>
    ),
  },
  {
    name: "移動1",
    icon: (
      <>
        <path d="M5 6l2-1h4v4l-2 2H5z" fill="#b4d8ee" stroke={DEEP} strokeWidth=".8" />
        <path d="M1 1h3v3H1z" fill="#dc5148" />
        <path d="M3 5v3h2" stroke="#aaa" strokeWidth=".7" />
      </>
    ),
  },
  {
    name: "平面1",
    icon: (
      <>
        <path d="M1 4l3-3v7l-3 3z" fill="#ccc" stroke="#888" strokeWidth=".5" />
        <path d="M4 4l3-3v7l-3 3z" fill={GREEN} />
        <path d="M8 4l3-3v7l-3 3z" fill={ORANGE} />
      </>
    ),
  },
  { name: "スケッチ2", icon: sketchIcon },
];

function Timeline() {
  return (
    <footer className="flex h-[26px] items-center bg-[#f4f4f4] pl-1 pr-[6px]">
      <div className="flex gap-1">
        {playback.map((item) => (
          <button key={item.name} aria-label={item.name}>
            <Svg className="size-[9px]" box={9}><path d={item.path} fill="#777" stroke="#777" strokeWidth=".9" /></Svg>
          </button>
        ))}
      </div>
      <div className="relative ml-[10px] flex gap-px pb-px">
        {features.map((item) => (
          <button key={item.name} aria-label={item.name}>
            <Svg className="size-[12px]" box={12}>{item.icon}</Svg>
          </button>
        ))}
        <svg viewBox="0 0 66 20" className="absolute -top-[2px] left-0 h-5 w-[66px]" fill="none" aria-hidden="true">
          <path d="M5.500 13v3.500h50V13M18.500 14v2M31.500 14v2M44.500 14v2" stroke="#bbb" />
          <path d="M58.500 1h6v3l-2 2h-2l-2-2z" fill="#333" />
          <path d="M61.500 4v14" stroke="#333" strokeWidth="1.200" />
        </svg>
      </div>
      <button aria-label="設定" className="ml-auto"><Gear /></button>
    </footer>
  );
}

export default function App() {
  return (
    <div className="flex min-h-screen flex-col bg-white font-['Open_Sans','Noto_Sans_CJK_JP',sans-serif] text-[#333] [font-feature-settings:'palt']">
      <TitleBar />
      <DocumentBar />
      <Ribbon />
      <main className="relative flex-1">
        <Model />
        <BrowserPanel />
        <ViewCube />
        <NavigationBar />
      </main>
      <Timeline />
    </div>
  );
}
